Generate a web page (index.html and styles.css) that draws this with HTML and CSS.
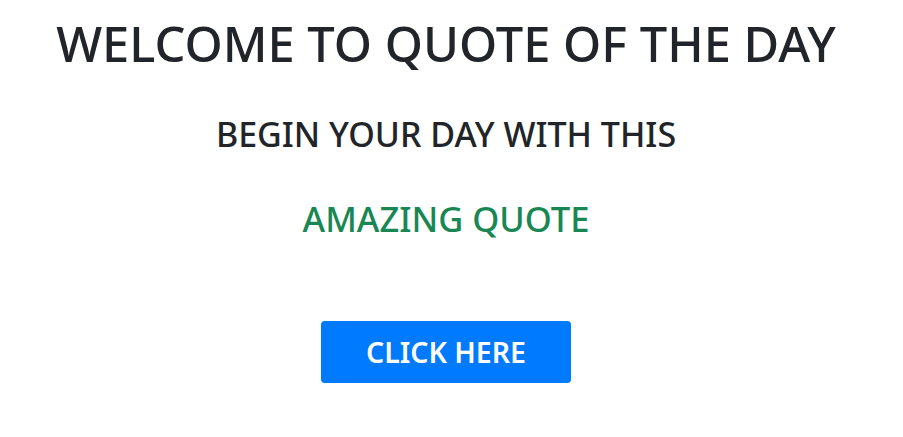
FILE: index.html
```
<!DOCTYPE html>
<html>
<head>
<meta charset="utf-8">
<link rel="stylesheet" href="styles.css">
</head>
<body>
<main class="page">
  <h1 class="title">WELCOME TO QUOTE OF THE DAY</h1>
  <h2 class="subtitle">BEGIN YOUR DAY WITH THIS</h2>
  <h2 class="accent">AMAZING QUOTE</h2>
  <button class="btn">CLICK HERE</button>
</main>
</body>
</html>
```
FILE: styles.css
```
html, body {
  margin: 0;
  padding: 0;
  background: #fff;
}
.page {
  display: flex;
  flex-direction: column;
  align-items: center;
  font-family: "Noto Sans", "Open Sans", sans-serif;
  color: #212529;
  padding: 14px 11px 0 0;
}
.title {
  margin: 0;
  font-size: 48.8px;
  font-weight: 500;
  line-height: 1.2;
}
.subtitle {
  margin: 41px 0 0;
  font-size: 34px;
  font-weight: 500;
  line-height: 1.2;
}
.accent {
  margin: 44px 0 0;
  font-size: 34.5px;
  font-weight: 500;
  line-height: 1.2;
  color: #198754;
}
.btn {
  margin-top: 81px;
  width: 250px;
  height: 62px;
  border: none;
  border-radius: 4px;
  background: #007bff;
  color: #fff;
  font-family: "Noto Sans", "Open Sans", sans-serif;
  font-size: 28.5px;
  font-weight: 600;
}
```
